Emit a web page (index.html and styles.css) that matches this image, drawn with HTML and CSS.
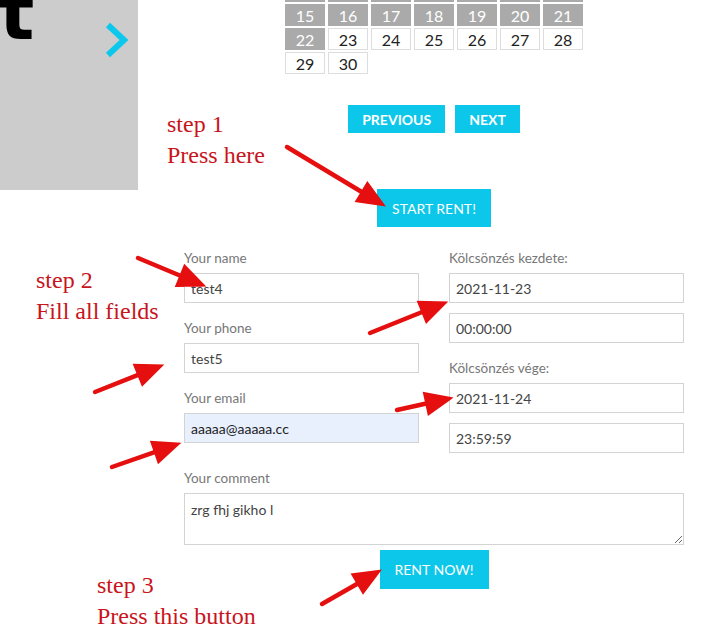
FILE: index.html
```html
<!DOCTYPE html>
<html lang="hu">
<head>
<meta charset="utf-8">
<title>Rent</title>
<link rel="stylesheet" href="styles.css">
</head>
<body>
<div class="page">
  <div class="layout">
    <div class="slider">
      <span class="slide-title">t</span>
      <svg class="slide-next" width="26" height="36" viewBox="0 0 26 36"><polyline points="4,3 20,18 4,33" fill="none" stroke="#0cc8ec" stroke-width="6"/></svg>
    </div>
    <main class="content">
      <div class="calendar">
        <div class="day past"></div><div class="day past"></div><div class="day past"></div><div class="day past"></div><div class="day past"></div><div class="day past"></div><div class="day past"></div>
        <div class="day past">15</div><div class="day past">16</div><div class="day past">17</div><div class="day past">18</div><div class="day past">19</div><div class="day past">20</div><div class="day past">21</div>
        <div class="day past">22</div><div class="day">23</div><div class="day">24</div><div class="day">25</div><div class="day">26</div><div class="day">27</div><div class="day">28</div>
        <div class="day">29</div><div class="day">30</div>
      </div>
      <div class="pager">
        <button class="btn btn-pager" type="button">Previous</button>
        <button class="btn btn-pager" type="button">Next</button>
      </div>
      <div class="start-row">
        <button class="btn btn-start" type="button">START RENT!</button>
      </div>
      <form class="rent-form">
        <div class="cols">
          <div class="col">
            <div class="field">
              <label class="label">Your name</label>
              <input class="input" type="text" value="test4">
            </div>
            <div class="field">
              <label class="label">Your phone</label>
              <input class="input" type="text" value="test5">
            </div>
            <div class="field">
              <label class="label">Your email</label>
              <input class="input input-filled" type="text" value="aaaaa@aaaaa.cc">
            </div>
          </div>
          <div class="col">
            <div class="field">
              <label class="label">Kölcsönzés kezdete:</label>
              <input class="input" type="text" value="2021-11-23">
              <input class="input input-next" type="text" value="00:00:00">
            </div>
            <div class="field">
              <label class="label">Kölcsönzés vége:</label>
              <input class="input" type="text" value="2021-11-24">
              <input class="input input-next" type="text" value="23:59:59">
            </div>
          </div>
        </div>
        <div class="field field-comment">
          <label class="label">Your comment</label>
          <textarea class="textarea">zrg fhj gikho l</textarea>
        </div>
        <div class="submit-row">
          <button class="btn btn-start" type="button">RENT NOW!</button>
        </div>
      </form>
    </main>
  </div>

  <div class="note note-1">step 1<br>Press here</div>
  <div class="note note-2">step 2<br>Fill all fields</div>
  <div class="note note-3">step 3<br>Press this button</div>

  <svg class="arrows" width="717" height="638" viewBox="0 0 717 638">
    <g stroke="#e60f0f" stroke-width="4.5" stroke-linecap="round" fill="#e60f0f">
      <line x1="287" y1="147" x2="363" y2="192.7"/>
      <polygon points="381,203.5 358.3,200.3 367.5,185.1"/>
      <line x1="138" y1="258" x2="181.6" y2="276.3"/>
      <polygon points="201,284.4 178.1,284.6 185,267.9"/>
      <line x1="95" y1="392" x2="139.4" y2="374.4"/>
      <polygon points="159,366.6 142.8,382.8 136,366"/>
      <line x1="112" y1="467" x2="156.1" y2="451.6"/>
      <polygon points="176,444.6 159,460.2 153.1,443.1"/>
      <line x1="370" y1="333" x2="423.4" y2="311.5"/>
      <polygon points="443,303.6 426.8,319.9 420,303.1"/>
      <line x1="397" y1="410" x2="427.5" y2="403.3"/>
      <polygon points="448,398.8 429.4,412.1 425.6,394.5"/>
      <line x1="322" y1="604" x2="358.7" y2="583"/>
      <polygon points="377,572.4 363.2,590.8 354.2,575.3"/>
    </g>
  </svg>
</div>
</body>
</html>
```

FILE: styles.css
```css
* { box-sizing: border-box; }

html, body {
  margin: 0;
  padding: 0;
  background: #ffffff;
}

body {
  font-family: Lato, "Open Sans", Arial, sans-serif;
  color: #333333;
}

.page {
  position: relative;
  width: 717px;
  height: 638px;
  overflow: hidden;
  background: #ffffff;
}

.layout {
  display: flex;
  align-items: flex-start;
}

.slider {
  position: relative;
  flex: 0 0 138px;
  width: 138px;
  height: 190px;
  background: #cccccc;
  overflow: hidden;
}

.slide-title {
  position: absolute;
  left: -1px;
  top: -24px;
  font-family: "DejaVu Sans", sans-serif;
  font-weight: 700;
  font-size: 74px;
  line-height: 1;
  color: #000000;
}

.slide-next {
  position: absolute;
  left: 104px;
  top: 22px;
}

.content {
  width: 500px;
  margin-left: 46px;
  display: flex;
  flex-direction: column;
  align-items: center;
}

.calendar {
  margin-top: -20px;
  display: grid;
  grid-template-columns: repeat(7, 40px);
  grid-auto-rows: 22px;
  column-gap: 3px;
  row-gap: 2px;
}

.day {
  display: flex;
  align-items: center;
  justify-content: center;
  font-size: 16px;
  color: #222222;
  background: #ffffff;
  border: 1px solid #dddddd;
}

.day.past {
  background: #aaaaaa;
  border-color: #aaaaaa;
  color: #ffffff;
}

.pager {
  margin-top: 31px;
  display: flex;
  gap: 10px;
}

.btn {
  border: none;
  background: #0cc7ea;
  color: #ffffff;
  font-family: Lato, "Open Sans", Arial, sans-serif;
  cursor: pointer;
  padding: 0 15px;
}

.btn-pager {
  height: 28px;
  font-size: 14px;
  font-weight: 700;
  text-transform: uppercase;
  padding: 0 14px;
}

.start-row {
  margin-top: 56px;
  display: flex;
  justify-content: center;
}

.btn-start {
  height: 38px;
  font-size: 14px;
  font-weight: 400;
}

.rent-form {
  margin-top: 22px;
  width: 500px;
}

.cols {
  display: grid;
  grid-template-columns: 235px 235px;
  column-gap: 30px;
}

.field {
  margin-bottom: 16px;
}

.col .field:last-child {
  margin-bottom: 0;
}

.field-comment {
  margin-top: 16px;
  margin-bottom: 0;
}

.label {
  display: block;
  font-size: 13.5px;
  line-height: 18px;
  margin-bottom: 6px;
  color: #777777;
}

.input {
  display: block;
  width: 100%;
  height: 30px;
  border: 1px solid #d3d3d3;
  border-radius: 0;
  padding: 0 6px;
  font-family: Lato, "Open Sans", Arial, sans-serif;
  font-size: 14px;
  color: #444444;
  background: #ffffff;
  outline: none;
}

.input-next {
  margin-top: 10px;
}

.input-filled {
  background: #e8f0fe;
  color: #222222;
}

.textarea {
  display: block;
  width: 100%;
  height: 52px;
  border: 1px solid #d3d3d3;
  padding: 7px 6px;
  font-family: Lato, "Open Sans", Arial, sans-serif;
  font-size: 14px;
  color: #444444;
  resize: vertical;
  outline: none;
}

.submit-row {
  margin-top: 5px;
  display: flex;
  justify-content: center;
}

.submit-row .btn-start {
  height: 39px;
}

.note {
  position: absolute;
  font-family: "Liberation Serif", "Times New Roman", serif;
  font-size: 24px;
  line-height: 31px;
  color: #c8141c;
  white-space: nowrap;
}

.note-1 { left: 167px; top: 109px; }
.note-2 { left: 36px; top: 265px; }
.note-3 { left: 97px; top: 570px; }

.arrows {
  position: absolute;
  left: 0;
  top: 0;
  pointer-events: none;
}
```
